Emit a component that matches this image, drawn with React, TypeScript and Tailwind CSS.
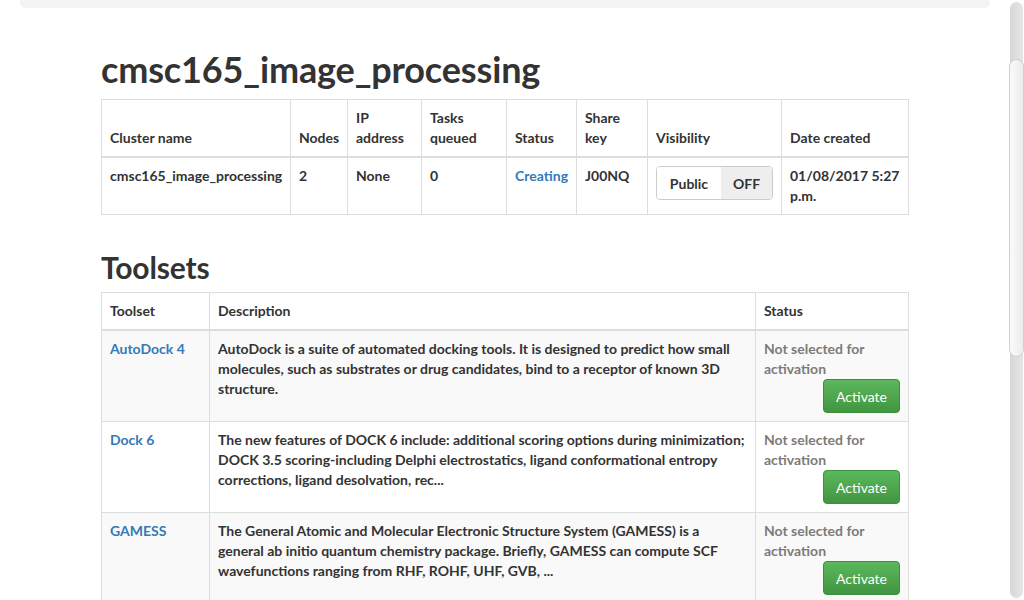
import React from "react";

const toolsets = [
  {
    name: "AutoDock 4",
    desc: "AutoDock is a suite of automated docking tools. It is designed to predict how small molecules, such as substrates or drug candidates, bind to a receptor of known 3D structure.",
  },
  {
    name: "Dock 6",
    desc: "The new features of DOCK 6 include: additional scoring options during minimization; DOCK 3.5 scoring-including Delphi electrostatics, ligand conformational entropy corrections, ligand desolvation, rec...",
  },
  {
    name: "GAMESS",
    desc: "The General Atomic and Molecular Electronic Structure System (GAMESS) is a general ab initio quantum chemistry package. Briefly, GAMESS can compute SCF wavefunctions ranging from RHF, ROHF, UHF, GVB, ...",
  },
];

export default function App() {
  return (
    <div
      className="flex h-[600px] w-[1024px] overflow-hidden bg-white text-[14px] leading-[20px] text-[#333333]"
      style={{ fontFamily: "Lato, 'Open Sans', sans-serif" }}
    >
      <div className="flex w-[1009px] flex-col items-center">
        <div className="h-[8px] w-[970px] shrink-0 rounded-b-[5px] bg-[#f3f3f3]" />
        <div className="flex w-[807px] flex-col">
          <h1 className="mt-[41px] mb-[10px] text-[36px] leading-[40px] font-bold tracking-[-0.15px] text-[#333]">
            cmsc165_image_processing
          </h1>
          <table className="w-[807px] table-fixed border-collapse border border-[#dddddd] font-bold">
            <colgroup>
              <col className="w-[189px]" />
              <col className="w-[57px]" />
              <col className="w-[74px]" />
              <col className="w-[85px]" />
              <col className="w-[70px]" />
              <col className="w-[71px]" />
              <col className="w-[134px]" />
              <col className="w-[127px]" />
            </colgroup>
            <thead>
              <tr className="border-b-2 border-[#dddddd]">
                {["Cluster name", "Nodes", "IP address", "Tasks queued", "Status", "Share key", "Visibility", "Date created"].map((h) => (
                  <th key={h} className="border border-[#dddddd] p-[8px] text-left align-bottom font-bold">
                    {h}
                  </th>
                ))}
              </tr>
            </thead>
            <tbody>
              <tr>
                <td className="border border-[#dddddd] p-[8px] align-top">cmsc165_image_processing</td>
                <td className="border border-[#dddddd] p-[8px] align-top">2</td>
                <td className="border border-[#dddddd] p-[8px] align-top">None</td>
                <td className="border border-[#dddddd] p-[8px] align-top">0</td>
                <td className="border border-[#dddddd] p-[8px] align-top text-[#337ab7]">Creating</td>
                <td className="border border-[#dddddd] p-[8px] align-top">J00NQ</td>
                <td className="border border-[#dddddd] p-[8px] align-top">
                  <div className="flex h-[34px] w-[117px] overflow-hidden rounded-[4px] border border-[#cccccc]">
                    <span className="flex w-[64px] items-center justify-center bg-white pt-[1px]">Public</span>
                    <span className="flex flex-1 items-center justify-center bg-[#eeeeee] pt-[1px]">OFF</span>
                  </div>
                </td>
                <td className="border border-[#dddddd] p-[8px] align-top">01/08/2017 5:27 p.m.</td>
              </tr>
            </tbody>
          </table>

          <h2 className="mt-[36px] mb-[8px] text-[30px] leading-[33px] font-bold tracking-[-0.15px]">Toolsets</h2>
          <table className="w-[807px] table-fixed border-collapse border border-[#dddddd] font-bold">
            <colgroup>
              <col className="w-[108px]" />
              <col className="w-[546px]" />
              <col className="w-[153px]" />
            </colgroup>
            <thead>
              <tr className="border-b-2 border-[#dddddd]">
                {["Toolset", "Description", "Status"].map((h) => (
                  <th key={h} className="border border-[#dddddd] p-[8px] text-left align-bottom font-bold">
                    {h}
                  </th>
                ))}
              </tr>
            </thead>
            <tbody>
              {toolsets.map((t, i) => (
                <tr key={t.name} className={i % 2 === 0 ? "bg-[#f9f9f9]" : "bg-white"}>
                  <td className="border border-[#dddddd] p-[8px] align-top text-[#337ab7]">{t.name}</td>
                  <td className="border border-[#dddddd] p-[8px] align-top">{t.desc}</td>
                  <td className="border border-[#dddddd] p-[8px] align-top">
                    <div className="text-[#7b7b7b]">Not selected for activation</div>
                    <div className="flex justify-end">
                      <button className="h-[34px] rounded-[4px] border border-[#3e8f3e] bg-gradient-to-b from-[#5cb85c] to-[#419641] px-[12px] pt-[1px] text-[14px] font-normal text-white">
                        Activate
                      </button>
                    </div>
                  </td>
                </tr>
              ))}
            </tbody>
          </table>
        </div>
      </div>
      <div className="flex w-[15px] shrink-0 justify-center bg-white pt-[2px] pb-[2px]">
        <div className="relative flex w-[13px] flex-col rounded-full bg-gradient-to-r from-[#d6d6d6] to-[#e6e6e6]">
          <div className="mt-[58px] h-[296px] w-[13px] rounded-full bg-gradient-to-r from-[#fafafa] to-[#ececec] shadow-[0_0_0_1px_#d0d0d0]" />
        </div>
      </div>
    </div>
  );
}
